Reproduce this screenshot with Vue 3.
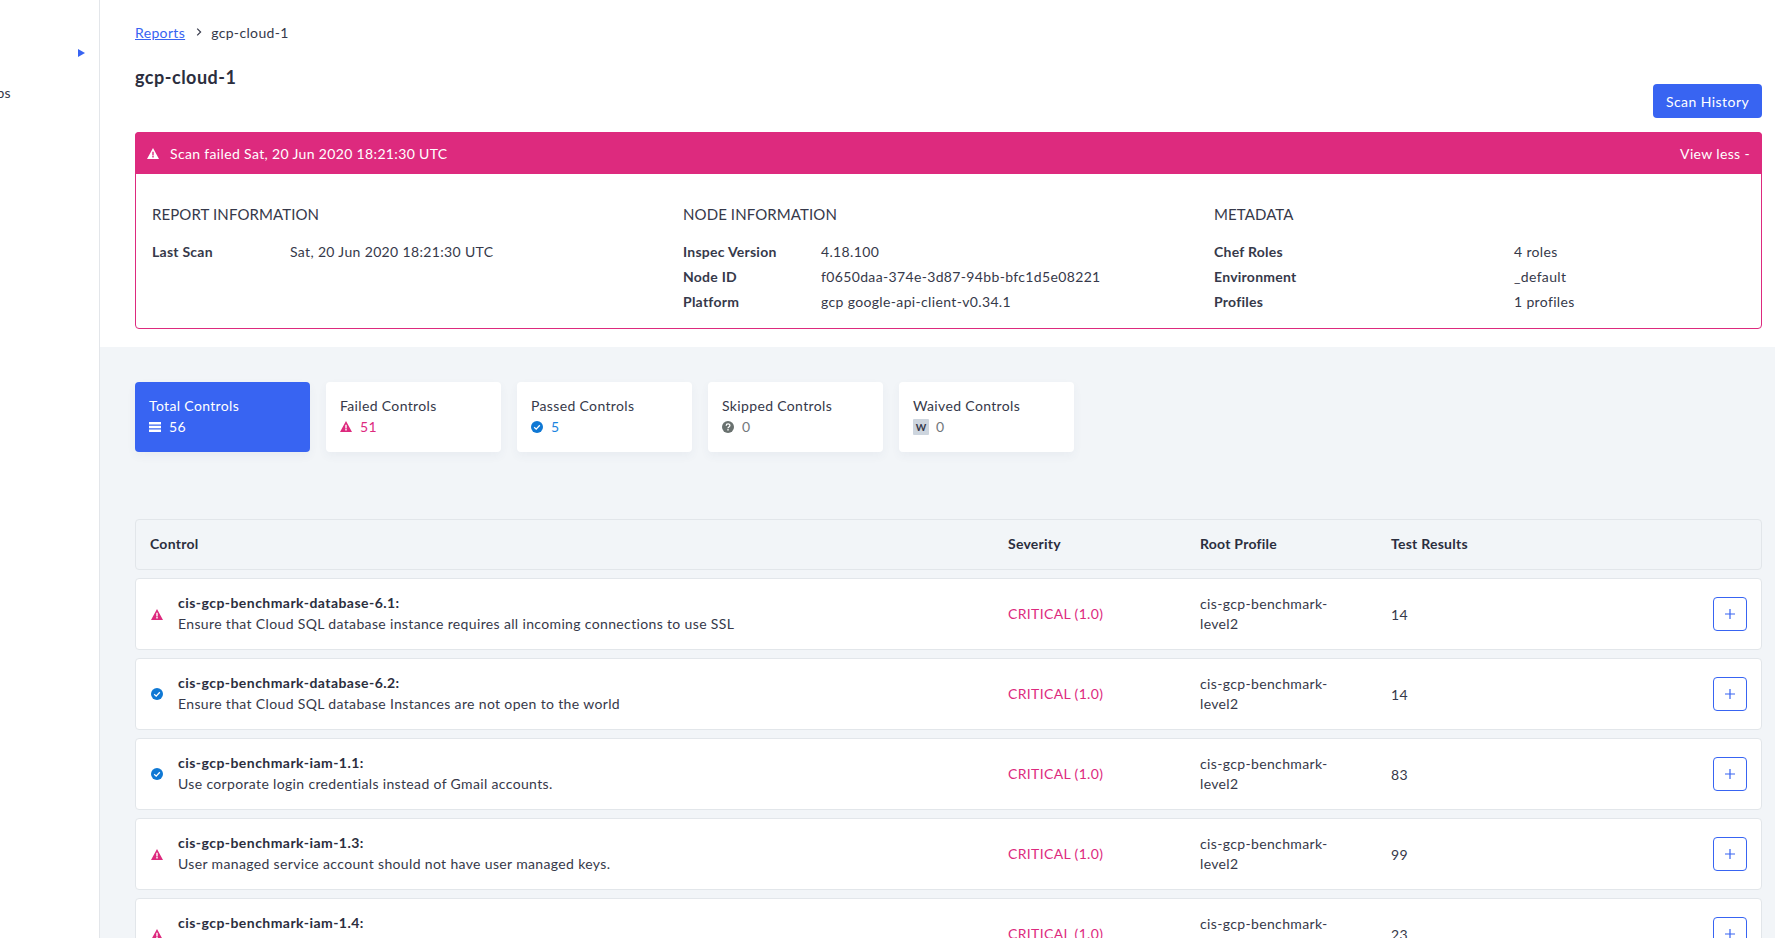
<script setup>
const info = [
  { title: 'REPORT INFORMATION', cols: 'narrow', rows: [['Last Scan', 'Sat, 20 Jun 2020 18:21:30 UTC']] },
  {
    title: 'NODE INFORMATION',
    cols: 'narrow',
    rows: [
      ['Inspec Version', '4.18.100'],
      ['Node ID', 'f0650daa-374e-3d87-94bb-bfc1d5e08221'],
      ['Platform', 'gcp google-api-client-v0.34.1'],
    ],
  },
  {
    title: 'METADATA',
    cols: 'wide',
    rows: [
      ['Chef Roles', '4 roles'],
      ['Environment', '_default'],
      ['Profiles', '1 profiles'],
    ],
  },
]

const cards = [
  { label: 'Total Controls', value: 56, kind: 'total' },
  { label: 'Failed Controls', value: 51, kind: 'failed' },
  { label: 'Passed Controls', value: 5, kind: 'passed' },
  { label: 'Skipped Controls', value: 0, kind: 'skipped' },
  { label: 'Waived Controls', value: 0, kind: 'waived' },
]

const controls = [
  { id: 'cis-gcp-benchmark-database-6.1:', desc: 'Ensure that Cloud SQL database instance requires all incoming connections to use SSL', status: 'failed', results: 14 },
  { id: 'cis-gcp-benchmark-database-6.2:', desc: 'Ensure that Cloud SQL database Instances are not open to the world', status: 'passed', results: 14 },
  { id: 'cis-gcp-benchmark-iam-1.1:', desc: 'Use corporate login credentials instead of Gmail accounts.', status: 'passed', results: 83 },
  { id: 'cis-gcp-benchmark-iam-1.3:', desc: 'User managed service account should not have user managed keys.', status: 'failed', results: 99 },
  { id: 'cis-gcp-benchmark-iam-1.4:', desc: '', status: 'failed', results: 23 },
]
</script>

<template>
  <div class="page">
    <aside class="sidebar">
      <div class="nav-arrow"><span class="triangle"></span></div>
      <div class="nav-clip"><span>Scan Jobs</span></div>
    </aside>

    <main class="main">
      <section class="top">
        <nav class="crumbs">
          <a class="crumb-link">Reports</a>
          <svg class="chevron" viewBox="0 0 8 10" width="8" height="10">
            <path d="M2.2 1.6 5.6 5 2.2 8.4" fill="none" stroke="#3a3d4d" stroke-width="1.2" />
          </svg>
          <span>gcp-cloud-1</span>
        </nav>
        <div class="title-row">
          <h1>gcp-cloud-1</h1>
          <button class="history">Scan History</button>
        </div>

        <div class="banner">
          <div class="banner-head">
            <svg class="banner-icon" viewBox="0 0 12 11" width="12" height="11">
              <path fill-rule="evenodd" d="M6 0 12 11H0ZM5.3 3.8V7.4H6.7V3.8ZM5.3 8.1V9.5H6.7V8.1Z" fill="#fff" />
            </svg>
            <span class="banner-text">Scan failed Sat, 20 Jun 2020 18:21:30 UTC</span>
            <span class="view-less">View less -</span>
          </div>
          <div class="banner-body">
            <div v-for="col in info" :key="col.title" class="info-col">
              <h2>{{ col.title }}</h2>
              <div v-for="row in col.rows" :key="row[0]" class="info-row" :class="col.cols">
                <strong>{{ row[0] }}</strong>
                <span>{{ row[1] }}</span>
              </div>
            </div>
          </div>
        </div>
      </section>

      <section class="lower">
        <div class="cards">
          <div v-for="card in cards" :key="card.kind" class="card" :class="card.kind">
            <div class="card-label">{{ card.label }}</div>
            <div class="card-value">
              <svg v-if="card.kind === 'total'" viewBox="0 0 12 10" width="12" height="10">
                <path d="M0 0H12V2.6H0ZM0 3.7H12V6.3H0ZM0 7.4H12V10H0Z" fill="#fff" />
              </svg>
              <svg v-else-if="card.kind === 'failed'" viewBox="0 0 12 11" width="12" height="11">
                <path fill-rule="evenodd" d="M6 0 12 11H0ZM5.3 3.8V7.4H6.7V3.8ZM5.3 8.1V9.5H6.7V8.1Z" fill="#dd2a7e" />
              </svg>
              <svg v-else-if="card.kind === 'passed'" viewBox="0 0 12 12" width="12" height="12">
                <circle cx="6" cy="6" r="6" fill="#0f78d4" />
                <path d="M3.2 6.2 5.2 8.1 8.8 4.3" fill="none" stroke="#fff" stroke-width="1.3" />
              </svg>
              <svg v-else-if="card.kind === 'skipped'" viewBox="0 0 12 12" width="12" height="12">
                <circle cx="6" cy="6" r="6" fill="#69716f" />
                <path d="M4.2 4.7C4.2 2.4 7.9 2.4 7.9 4.6 7.9 6 6 5.9 6 7.2" fill="none" stroke="#fff" stroke-width="1.3" />
                <rect x="5.3" y="8.1" width="1.4" height="1.4" fill="#fff" />
              </svg>
              <span v-else class="waived-badge">W</span>
              <span class="count">{{ card.value }}</span>
            </div>
          </div>
        </div>

        <div class="table-head">
          <span>Control</span>
          <span>Severity</span>
          <span>Root Profile</span>
          <span>Test Results</span>
        </div>

        <div v-for="item in controls" :key="item.id" class="row">
          <div class="control">
            <svg v-if="item.status === 'failed'" viewBox="0 0 12 11" width="12" height="11">
              <path fill-rule="evenodd" d="M6 0 12 11H0ZM5.3 3.8V7.4H6.7V3.8ZM5.3 8.1V9.5H6.7V8.1Z" fill="#dd2a7e" />
            </svg>
            <svg v-else viewBox="0 0 12 12" width="12" height="12">
              <circle cx="6" cy="6" r="6" fill="#0f78d4" />
              <path d="M3.2 6.2 5.2 8.1 8.8 4.3" fill="none" stroke="#fff" stroke-width="1.3" />
            </svg>
            <div class="control-text">
              <div class="control-id">{{ item.id }}</div>
              <div class="control-desc">{{ item.desc }}</div>
            </div>
          </div>
          <span class="severity">CRITICAL (1.0)</span>
          <span class="profile">cis-gcp-benchmark-level2</span>
          <span>{{ item.results }}</span>
          <button class="expand">
            <svg viewBox="0 0 10 10" width="10" height="10">
              <path d="M5 0V10M0 5H10" stroke="#3864f2" stroke-width="1.2" />
            </svg>
          </button>
        </div>
      </section>
    </main>
  </div>
</template>

<style>
html,
body {
  height: 100%;
  overflow: hidden;
}
</style>

<style scoped>
.page {
  display: flex;
  height: 938px;
  overflow: hidden;
  font-family: Lato, "Open Sans", sans-serif;
  font-size: 14px;
  letter-spacing: 0.35px;
  color: #36394a;
  background: #fff;
}

.sidebar {
  flex: none;
  width: 99px;
  border-right: 1px solid #e3e6ea;
  padding-top: 47px;
}

.nav-arrow {
  display: flex;
  justify-content: flex-end;
  padding-right: 14px;
  height: 12px;
  align-items: center;
}

.triangle {
  width: 0;
  height: 0;
  border-left: 7px solid #3864f2;
  border-top: 4px solid transparent;
  border-bottom: 4px solid transparent;
}

.nav-clip {
  display: flex;
  justify-content: flex-end;
  width: 11px;
  margin-top: 24px;
  overflow: hidden;
  white-space: nowrap;
  line-height: 20px;
}

.main {
  flex: 1;
  min-width: 0;
}

.top {
  height: 347px;
  padding: 23px 13px 0 35px;
  box-sizing: border-box;
}

.crumbs {
  display: flex;
  align-items: center;
  height: 18px;
}

.crumb-link {
  color: #3864f2;
  text-decoration: underline;
}

.chevron {
  margin: 0 8px 0 10px;
}

.title-row {
  display: flex;
  justify-content: space-between;
  align-items: flex-end;
  margin-bottom: 14px;
}

h1 {
  margin: 0 0 29px;
  font-size: 18px;
  line-height: 24px;
  font-weight: 700;
  letter-spacing: 0.5px;
  color: #2b2e3e;
  padding-top: 24px;
}

.history {
  width: 109px;
  height: 34px;
  padding: 0;
  border: 0;
  border-radius: 4px;
  background: #3864f2;
  color: #fff;
  font: inherit;
  letter-spacing: 0.45px;
}

.banner {
  border: 1px solid #dd2a7e;
  border-radius: 4px;
  height: 197px;
  box-sizing: border-box;
}

.banner-head {
  display: flex;
  align-items: center;
  height: 42px;
  margin: -1px -1px 0;
  padding: 0 12px;
  background: #dd2a7e;
  border-radius: 4px 4px 0 0;
  color: #fff;
}

.banner-icon {
  margin-right: 11px;
}

.banner-text {
  flex: 1;
}

.banner-body {
  display: grid;
  grid-template-columns: repeat(3, 1fr);
  padding: 28px 16px 0;
}

h2 {
  margin: 0 0 13px;
  font-size: 15px;
  line-height: 24px;
  font-weight: 400;
  letter-spacing: 0.1px;
}

.info-row {
  display: grid;
  line-height: 25px;
}

.info-row.narrow {
  grid-template-columns: 138px 1fr;
}

.info-row.wide {
  grid-template-columns: 300px 1fr;
}

.info-row strong {
  font-weight: 700;
  letter-spacing: 0.25px;
}

.lower {
  height: 591px;
  margin-left: 0;
  padding: 35px 13px 0 35px;
  background: #f2f5f8;
  box-sizing: border-box;
}

.cards {
  display: flex;
  gap: 16px;
  margin-bottom: 67px;
}

.card {
  width: 175px;
  height: 70px;
  padding: 14px;
  box-sizing: border-box;
  border-radius: 4px;
  background: #fff;
  box-shadow: 0 4px 10px rgba(60, 80, 110, 0.05);
}

.card.total {
  background: #3864f2;
  color: #fff;
}

.card-label {
  line-height: 20px;
}

.card-value {
  display: flex;
  align-items: center;
  height: 21px;
  gap: 8px;
}

.failed .count {
  color: #dd2a7e;
}

.passed .count {
  color: #1a84e0;
}

.skipped .count,
.waived .count {
  color: #72777c;
}

.waived-badge {
  display: flex;
  align-items: center;
  justify-content: center;
  width: 16px;
  height: 16px;
  margin-right: -1px;
  border-radius: 1px;
  background: #cdd5de;
  font-size: 10px;
  font-weight: 700;
  letter-spacing: 0;
}

.table-head,
.row {
  display: grid;
  grid-template-columns: 858px 192px 191px 1fr 34px;
  align-items: center;
  padding: 0 14px;
  border: 1px solid #e2e6ea;
  border-radius: 4px;
  box-sizing: border-box;
}

.table-head {
  height: 51px;
  margin-bottom: 8px;
  font-weight: 700;
  letter-spacing: 0.25px;
  color: #2b2e3e;
  padding-bottom: 2px;
}

.row {
  height: 72px;
  margin-bottom: 8px;
  background: #fff;
}

.control {
  display: flex;
  align-items: center;
  gap: 15px;
  padding-left: 1px;
}

.control-text {
  line-height: 21px;
  padding-bottom: 2px;
}

.control-id {
  font-weight: 700;
  letter-spacing: 0.45px;
  color: #2b2e3e;
}

.control-desc {
  min-height: 21px;
}

.severity {
  color: #dd2a7e;
  padding-bottom: 2px;
}

.profile {
  width: 140px;
  line-height: 20px;
}

.expand {
  display: flex;
  align-items: center;
  justify-content: center;
  width: 34px;
  height: 34px;
  padding: 0;
  background: #fff;
  border: 1px solid #3864f2;
  border-radius: 4px;
}
</style>
